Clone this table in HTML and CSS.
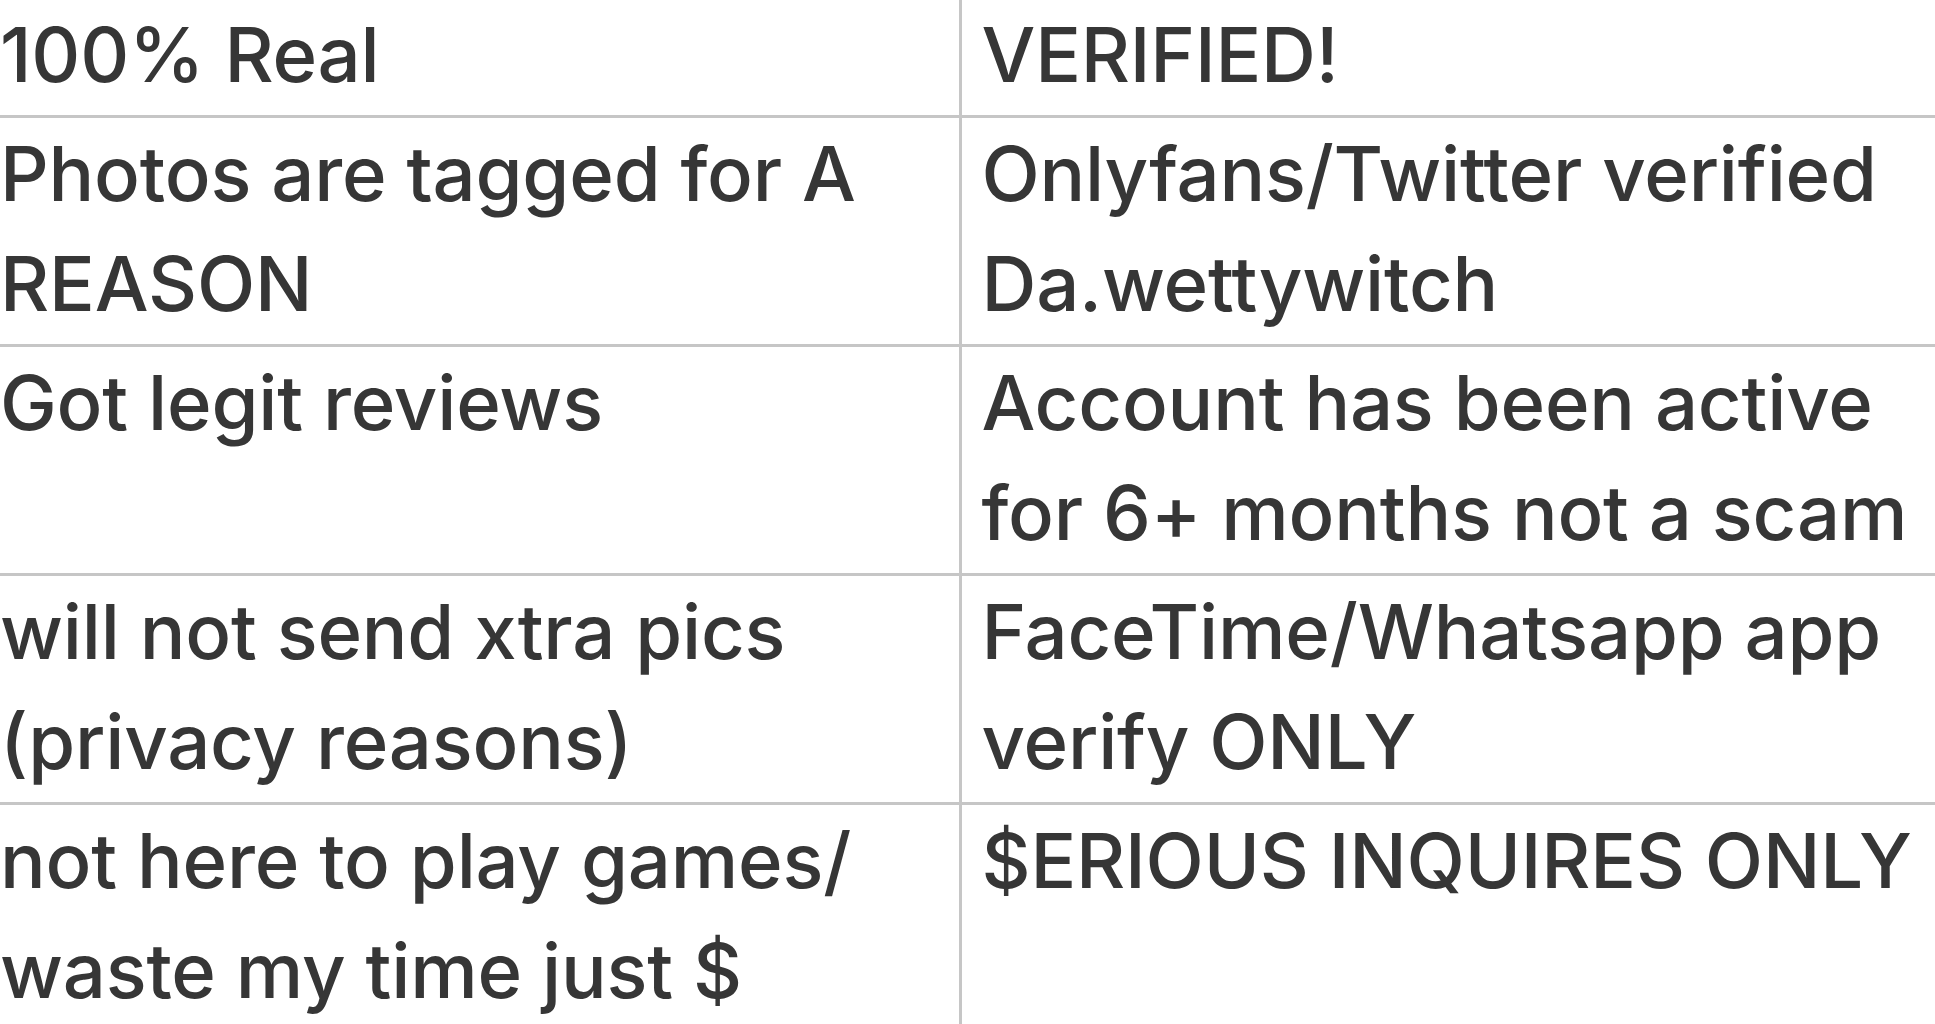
FILE: index.html
```html
<!DOCTYPE html>
<html lang="en">
<head>
<meta charset="utf-8">
<title>Table</title>
<link rel="stylesheet" href="styles.css">
</head>
<body>
<table class="grid">
  <colgroup>
    <col class="col-left">
    <col class="col-right">
  </colgroup>
  <tbody>
    <tr>
      <td class="cell cell-left">100% Real</td>
      <td class="cell cell-right">VERIFIED!</td>
    </tr>
    <tr>
      <td class="cell cell-left">Photos are tagged for A<br>REASON</td>
      <td class="cell cell-right">Onlyfans/Twitter verified<br>Da.wettywitch</td>
    </tr>
    <tr>
      <td class="cell cell-left">Got legit reviews</td>
      <td class="cell cell-right">Account has been active<br>for 6+ months not a scam</td>
    </tr>
    <tr>
      <td class="cell cell-left">will not send xtra pics<br>(privacy reasons)</td>
      <td class="cell cell-right">FaceTime/Whatsapp app<br>verify ONLY</td>
    </tr>
    <tr>
      <td class="cell cell-left">not here to play games/<br>waste my time just $</td>
      <td class="cell cell-right">$ERIOUS INQUIRES ONLY</td>
    </tr>
  </tbody>
</table>
</body>
</html>
```
FILE: styles.css
```css
html, body {
  margin: 0;
  padding: 0;
  background: #ffffff;
  overflow: hidden;
}

.grid {
  border-collapse: collapse;
  table-layout: fixed;
  width: 2000px;
  margin-top: -4px;
  font-family: Inter, "Noto Sans", sans-serif;
  font-size: 76px;
  font-weight: 500;
  letter-spacing: -0.2px;
  line-height: 110px;
  color: #363636;
}

.col-left {
  width: 960px;
}

.col-right {
  width: 1040px;
}

.cell {
  vertical-align: top;
  white-space: nowrap;
  padding: 0 0 6px 0;
  border-top: 3px solid #c6c6c6;
  border-bottom: 3px solid #c6c6c6;
}

.cell-left {
  padding-left: 0;
  border-right: 3px solid #c6c6c6;
}

.cell-right {
  padding-left: 20px;
}
```
